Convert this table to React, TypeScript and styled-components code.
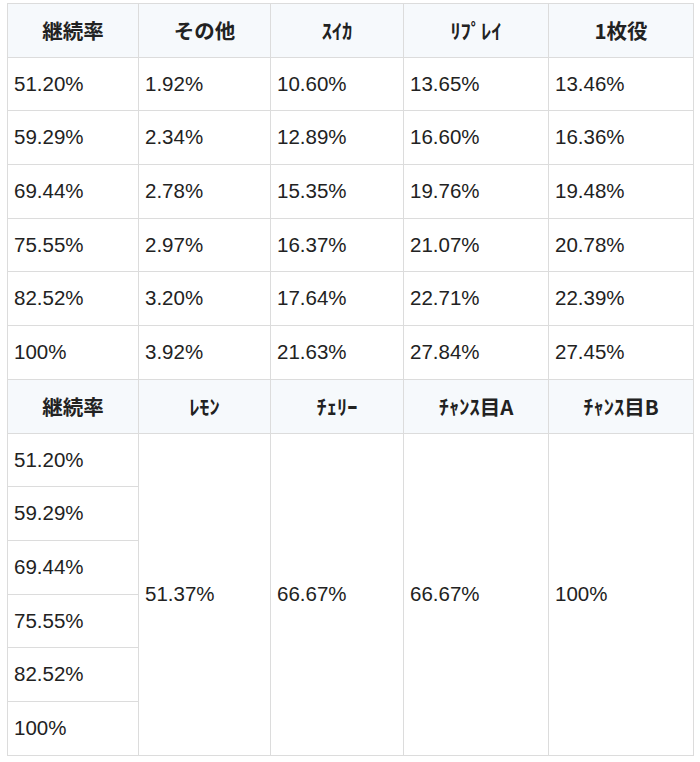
import React from "react";
import styled, { createGlobalStyle } from "styled-components";

const Global = createGlobalStyle`
  html, body { margin: 0; padding: 0; background: #fff; }
  body { font-family: "Liberation Sans", "Noto Sans CJK JP", Arial, sans-serif; color: #222; }
`;

const Wrap = styled.div`
  padding: 3px 7px 0 7px;
`;

const Table = styled.table`
  border-collapse: collapse;
  table-layout: fixed;
  width: 686px;
`;

const Col = styled.col<{ $w: number }>`
  width: ${(p) => p.$w}px;
`;

const Th = styled.th`
  background: #f6f9fc;
  border: 1px solid #dcdcdc;
  font-family: "Noto Sans CJK JP", "Liberation Sans", sans-serif;
  font-weight: 700;
  font-size: 20.5px;
  line-height: 30px;
  padding: 11px 8px 11.7px;
  text-align: center;
  color: #222;
`;

const Td = styled.td`
  border: 1px solid #dcdcdc;
  font-family: "Liberation Sans", Arial, sans-serif;
  font-size: 20.5px;
  line-height: 30px;
  padding: 11px 6px 11.7px;
  text-align: left;
  vertical-align: middle;
  color: #222;
`;

const widths = [131, 132, 133, 145, 145];

const top = {
  head: ["継続率", "その他", "ｽｲｶ", "ﾘﾌﾟﾚｲ", "1枚役"],
  rows: [
    ["51.20%", "1.92%", "10.60%", "13.65%", "13.46%"],
    ["59.29%", "2.34%", "12.89%", "16.60%", "16.36%"],
    ["69.44%", "2.78%", "15.35%", "19.76%", "19.48%"],
    ["75.55%", "2.97%", "16.37%", "21.07%", "20.78%"],
    ["82.52%", "3.20%", "17.64%", "22.71%", "22.39%"],
    ["100%", "3.92%", "21.63%", "27.84%", "27.45%"],
  ],
};

const bottomHead = ["継続率", "ﾚﾓﾝ", "ﾁｪﾘｰ", "ﾁｬﾝｽ目A", "ﾁｬﾝｽ目B"];
const bottomRates = ["51.20%", "59.29%", "69.44%", "75.55%", "82.52%", "100%"];
const bottomValues = ["51.37%", "66.67%", "66.67%", "100%"];

export default function App() {
  return (
    <>
      <Global />
      <Wrap>
        <Table>
          <colgroup>
            {widths.map((w, i) => (
              <Col key={i} $w={w} />
            ))}
          </colgroup>
          <tbody>
            <tr>
              {top.head.map((h) => (
                <Th key={h}>{h}</Th>
              ))}
            </tr>
            {top.rows.map((r, i) => (
              <tr key={i}>
                {r.map((c, j) => (
                  <Td key={j}>{c}</Td>
                ))}
              </tr>
            ))}
            <tr>
              {bottomHead.map((h) => (
                <Th key={h}>{h}</Th>
              ))}
            </tr>
            {bottomRates.map((rate, i) => (
              <tr key={rate}>
                <Td>{rate}</Td>
                {i === 0 &&
                  bottomValues.map((v, j) => (
                    <Td key={j} rowSpan={6}>
                      {v}
                    </Td>
                  ))}
              </tr>
            ))}
          </tbody>
        </Table>
      </Wrap>
    </>
  );
}
